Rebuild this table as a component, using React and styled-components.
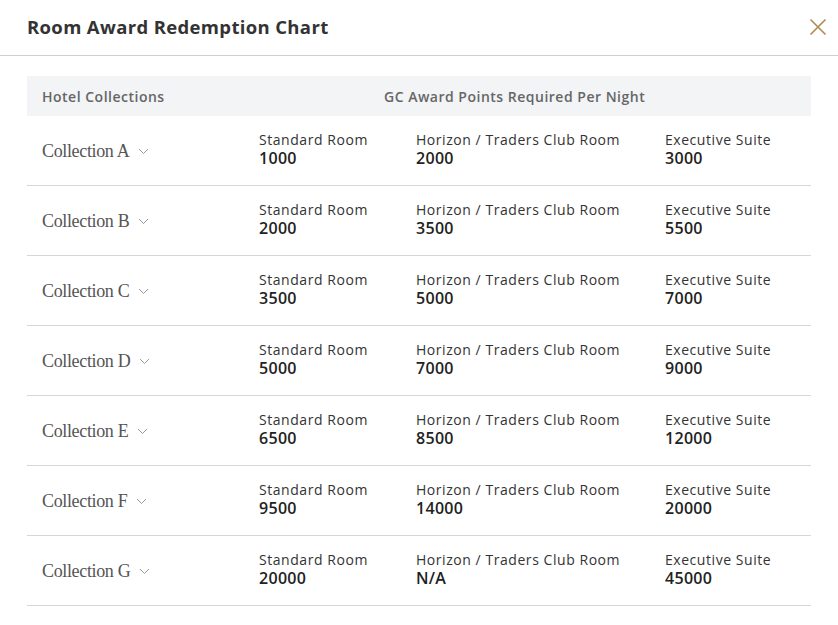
import React from "react";
import styled, { createGlobalStyle } from "styled-components";

const Global = createGlobalStyle`
  html, body { margin: 0; padding: 0; background: #fff; }
  body { font-family: "Open Sans", "Liberation Sans", sans-serif; color: #333; }
  * { box-sizing: border-box; }
`;

const Modal = styled.div`
  width: 838px;
  height: 625px;
  background: #fff;
  display: flex;
  flex-direction: column;
`;

const Header = styled.header`
  height: 56px;
  border-bottom: 1px solid #cfcfcf;
  display: flex;
  align-items: center;
  justify-content: space-between;
  padding: 0 11px 2px 27px;
`;

const Title = styled.h1`
  margin: 0;
  font-size: 18.5px;
  font-weight: 700;
  color: #333;
  letter-spacing: 0.35px;
`;

const CloseButton = styled.button`
  border: 0;
  background: none;
  padding: 0;
  width: 18px;
  height: 18px;
  display: flex;
  cursor: pointer;
`;

const Body = styled.div`
  padding: 20px 27px 0 27px;
`;

const TableHead = styled.div`
  height: 40px;
  background: #f3f4f6;
  display: grid;
  grid-template-columns: 342px 1fr;
  align-items: center;
  padding-left: 15px;
  font-size: 14px;
  font-weight: 600;
  color: #666;
  letter-spacing: 0.5px;
`;

const Row = styled.div`
  height: 70px;
  border-bottom: 1px solid #d6d6d6;
  display: grid;
  grid-template-columns: 217px 157px 249px 1fr;
  align-items: center;
  padding-left: 15px;
`;

const CollectionName = styled.div`
  display: flex;
  align-items: center;
  gap: 9px;
  font-family: "Liberation Serif", "DejaVu Serif", serif;
  font-size: 18px;
  letter-spacing: -0.35px;
  color: #555;
  padding-top: 1px;
`;

const Cell = styled.div`
  display: flex;
  flex-direction: column;
  padding-bottom: 3px;
`;

const Label = styled.span`
  font-size: 14px;
  line-height: 18px;
  color: #333;
  letter-spacing: 0.55px;
`;

const Value = styled.span`
  font-size: 16px;
  line-height: 18px;
  font-weight: 600;
  color: #222;
  letter-spacing: 0.3px;
`;

const Chevron = () => (
  <svg width="11" height="7" viewBox="0 0 11 7" fill="none">
    <path d="M1 1l4.5 4.5L10 1" stroke="#9a9a9a" strokeWidth="1" />
  </svg>
);

const data = [
  ["A", "1000", "2000", "3000"],
  ["B", "2000", "3500", "5500"],
  ["C", "3500", "5000", "7000"],
  ["D", "5000", "7000", "9000"],
  ["E", "6500", "8500", "12000"],
  ["F", "9500", "14000", "20000"],
  ["G", "20000", "N/A", "45000"],
];

export default function App() {
  return (
    <>
      <Global />
      <Modal>
        <Header>
          <Title>Room Award Redemption Chart</Title>
          <CloseButton aria-label="Close">
            <svg width="18" height="18" viewBox="0 0 18 18">
              <path d="M1.5 1.5l15 15M16.5 1.5l-15 15" stroke="#b08a4f" strokeWidth="1.6" />
            </svg>
          </CloseButton>
        </Header>
        <Body>
          <TableHead>
            <span>Hotel Collections</span>
            <span>GC Award Points Required Per Night</span>
          </TableHead>
          {data.map(([c, s, h, e]) => (
            <Row key={c}>
              <CollectionName>
                Collection {c}
                <Chevron />
              </CollectionName>
              <Cell>
                <Label>Standard Room</Label>
                <Value>{s}</Value>
              </Cell>
              <Cell>
                <Label>Horizon / Traders Club Room</Label>
                <Value>{h}</Value>
              </Cell>
              <Cell>
                <Label>Executive Suite</Label>
                <Value>{e}</Value>
              </Cell>
            </Row>
          ))}
        </Body>
      </Modal>
    </>
  );
}
